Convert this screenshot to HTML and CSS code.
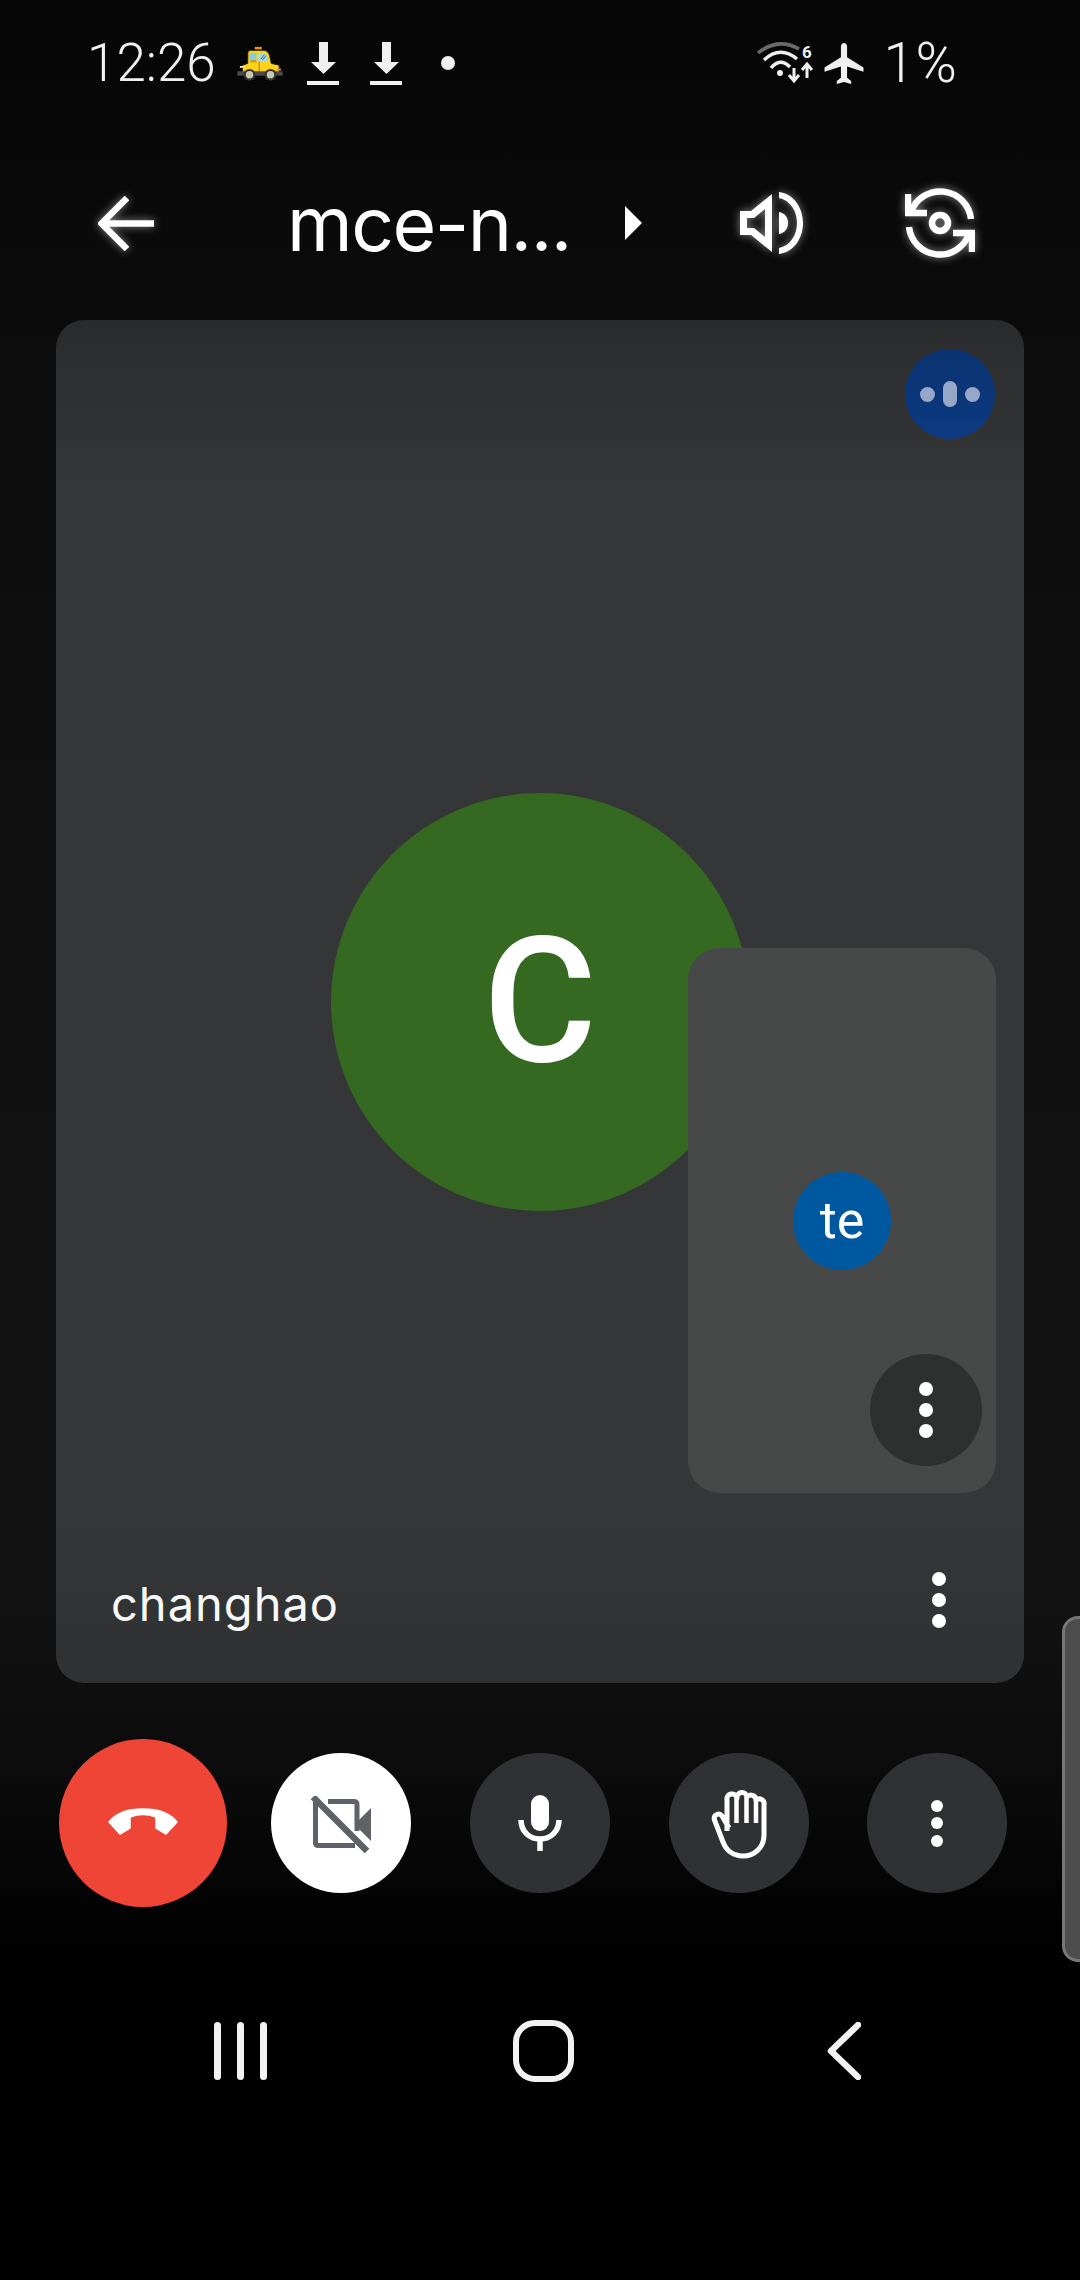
FILE: index.html
```html
<!DOCTYPE html>
<html lang="en">
<head>
    <meta charset="UTF-8">
    <meta name="viewport" content="width=device-width, initial-scale=1.0">
    <title>Meet call</title>
    <link rel="stylesheet" href="styles.css">
</head>
<body>
    <!-- status bar -->
    <div class="status-bar">
        <div class="status-left">
            <span class="status-text time">12:26</span>
            <svg class="ic-taxi" viewBox="-4 -4 64 55">
                <rect x="22" y="5" width="8" height="3" fill="#f28c1c"/>
                <path d="M14 24 V12 Q14 9 17 9 H32 Q37 9 39 15 L41 24 L50 26 V37 H8 V26 Z" fill="#ffd21a" stroke="#1a1a1a" stroke-width="1"/>
                <path d="M16 22 V12 H24 V22 Z" fill="#8ccbdc"/>
                <path d="M26 22 V12 H33 Q35 12 36 16 L38 22 Z" fill="#a3dbe6"/>
                <path d="M29 19 L33 14 M31 20 L35 15" stroke="#3a5a66" stroke-width="1"/>
                <rect x="17" y="20" width="7" height="3" rx="1" fill="#d79a12"/>
                <path d="M27 22 V35" stroke="#8a6d10" stroke-width="1"/>
                <rect x="2" y="33" width="52" height="5" fill="#4a4a4a"/>
                <rect x="5" y="27" width="5" height="2" fill="#fff3b0"/>
                <rect x="47" y="30" width="5" height="2" fill="#e88a8a"/>
                <circle cx="16" cy="37" r="5.5" fill="#c9c9b4" stroke="#333" stroke-width="2.5"/>
                <circle cx="40" cy="37" r="5.5" fill="#c9c9b4" stroke="#333" stroke-width="2.5"/>
            </svg>
            <svg class="ic-download" viewBox="0 0 32 43"><path d="M12 0 H21 V20 H29 L16.5 32 L4 20 H12 Z M0 39 H32 V43 H0 Z" fill="#f0f0f0"/></svg>
            <svg class="ic-download" viewBox="0 0 32 43"><path d="M12 0 H21 V20 H29 L16.5 32 L4 20 H12 Z M0 39 H32 V43 H0 Z" fill="#f0f0f0"/></svg>
            <span class="status-dot"></span>
        </div>
        <div class="status-right">
            <svg class="ic-wifi" viewBox="0 0 58 42">
                <path d="M1 11 Q21 -5 42 7" fill="none" stroke="#6a6a6a" stroke-width="3.5"/>
                <path d="M7 18 Q23 3 40 17" fill="none" stroke="#f0f0f0" stroke-width="3.5"/>
                <path d="M14 26 Q23 15 33 25" fill="none" stroke="#f0f0f0" stroke-width="3.5"/>
                <circle cx="23" cy="31" r="3" fill="#f0f0f0"/>
                <path d="M37 26 V39 M32 33 L37 39 L42 33 M50 36 V23 M45 28 L50 22 L55 28" fill="none" stroke="#f0f0f0" stroke-width="3"/>
                <text x="45" y="16" class="wifi-six">6</text>
            </svg>
            <svg class="ic-plane" viewBox="2 2 19 20"><path d="M21 16v-2l-8-5V3.5c0-.83-.67-1.5-1.5-1.5S10 2.67 10 3.5V9l-8 5v2l8-2.5V19l-2 1.5V22l3.5-1 3.5 1v-1.5L13 19v-5.5l8 2.5z" fill="#f0f0f0"/></svg>
            <span class="status-text battery">1%</span>
        </div>
    </div>

    <!-- top toolbar -->
    <div class="toolbar">
        <svg class="ic-back glow" viewBox="0 0 56 55"><path d="M56 27.5 H5 M29 2 L3.5 27.5 L29 53" fill="none" stroke="#fff" stroke-width="6.5"/></svg>
        <span class="title">mce-n...</span>
        <svg class="ic-caret" viewBox="0 0 17 34"><path d="M0 0 L17 17 L0 34 Z" fill="#fff"/></svg>
        <svg class="ic-speaker glow" viewBox="0 0 63 62">
            <path fill-rule="evenodd" d="M0 19 H11 L32 2 V60 L11 43 H0 Z M7 26 V36 H14 L25 45 V17 L14 26 Z" fill="#fff"/>
            <path d="M39 20 C45 21 48 26 48 31 C48 36 45 41 39 42 Z" fill="#fff"/>
            <path d="M39 0 C54 2 63 16 63 31 C63 46 54 60 39 62 V56 C50 54 57 43 57 31 C57 19 50 8 39 6 Z" fill="#fff"/>
        </svg>
        <svg class="ic-flip glow" viewBox="0 0 70 70">
            <circle cx="35" cy="35" r="8" fill="none" stroke="#fff" stroke-width="6.5"/>
            <g fill="none" stroke="#fff" stroke-width="6.5">
                <path d="M6 24 A31 31 0 0 1 66 31"/>
                <path d="M3 6 V25 H22"/>
                <path d="M64 46 A31 31 0 0 1 4 39"/>
                <path d="M67 64 V45 H48"/>
            </g>
        </svg>
    </div>

    <!-- main participant -->
    <div class="stage">
        <div class="avatar-big">C</div>

        <div class="speaking-badge">
            <span class="speak-dot"></span>
            <span class="speak-bar"></span>
            <span class="speak-dot"></span>
        </div>

        <div class="self-tile">
            <div class="avatar-small">te</div>
            <button class="tile-more">
                <span class="dots"><i></i><i></i><i></i></span>
            </button>
        </div>

        <span class="name">changhao</span>
        <span class="dots stage-dots"><i></i><i></i><i></i></span>
    </div>

    <!-- call controls -->
    <div class="controls">
        <button class="ctrl ctrl-end">
            <svg class="ic-hangup" viewBox="0 0 70 27"><path d="M1 14 C8 5 20 1 35 1 C50 1 62 5 69 14 L58 26 L48 20 V9 C40 6 30 6 22 9 V20 L12 26 Z" fill="#fff" stroke="#fff" stroke-width="1.5" stroke-linejoin="round"/></svg>
        </button>
        <button class="ctrl ctrl-video">
            <svg class="ic-video" viewBox="0 0 60 57">
                <g fill="none" stroke="#5f6368" stroke-width="5">
                    <path d="M17 5.5 H43 Q46 5.5 46 8.5 V35"/>
                    <path d="M4.5 6 V47 Q4.5 49.5 7.5 49.5 H44"/>
                </g>
                <path d="M2 1 L56 55" stroke="#5f6368" stroke-width="6.5"/>
                <path d="M48 24 L60 12 V45 L48 33 Z" fill="#5f6368"/>
            </svg>
        </button>
        <button class="ctrl">
            <svg class="ic-mic" viewBox="0 0 44 56">
                <rect x="13" y="0" width="18" height="36" rx="9" fill="#fff"/>
                <path d="M3 25 C3 36 11 44 22 44 C33 44 41 36 41 25 M22 44 V56" fill="none" stroke="#fff" stroke-width="5.5"/>
            </svg>
        </button>
        <button class="ctrl">
            <svg class="ic-hand" viewBox="0 0 56 72">
                <path d="M16 44 V13 A5 5 0 0 1 26 11 A5 5 0 0 1 36 10 A5 5 0 0 1 45 13 A5 5 0 0 1 53 18 V48 C53 61 43 69 32 69 C22 69 15 63 12 55 L3.5 33 C2 28 8 25 11 29 L18 41" fill="none" stroke="#fff" stroke-width="5" stroke-linejoin="round"/>
                <path d="M25.5 11 V36 M35.5 10 V36 M45 13 V36" fill="none" stroke="#fff" stroke-width="4.5"/>
            </svg>
        </button>
        <button class="ctrl ctrl-more">
            <span class="dots dots-small"><i></i><i></i><i></i></span>
        </button>
    </div>

    <div class="edge-panel"></div>

    <!-- android nav bar -->
    <div class="nav-bar">
        <div class="nav-recents"><i></i><i></i><i></i></div>
        <div class="nav-home"></div>
        <svg class="ic-navback" viewBox="0 0 34 58"><path d="M31 3 L4 29 L31 55" fill="none" stroke="#f2f2f2" stroke-width="6.5" stroke-linecap="round" stroke-linejoin="round"/></svg>
    </div>
</body>
</html>
```

FILE: styles.css
```css
/* page */
html, body {
    margin: 0;
    padding: 0;
}

body {
    position: relative;
    width: 1080px;
    height: 2280px;
    overflow: hidden;
    font-family: Roboto, "Liberation Sans", sans-serif;
    color: #fff;
    background: linear-gradient(to bottom, #050505 0, #0a0a0a 220px, #111 900px, #121212 1600px, #0c0c0c 1760px, #020202 1920px, #000 2020px);
}

svg {
    display: block;
    flex: none;
}

button {
    border: 0;
    padding: 0;
}

.glow {
    filter: drop-shadow(0 0 4px rgba(255, 255, 255, 0.5));
}

/* status bar */
.status-bar {
    height: 126px;
    display: flex;
    align-items: center;
    justify-content: space-between;
    padding: 0 122px 0 87px;
}

.status-left,
.status-right {
    display: flex;
    align-items: center;
}

.status-text {
    font-size: 53px;
    font-weight: 300;
    color: #f0f0f0;
    line-height: 60px;
}

.time {
    width: 145px;
}

.ic-taxi {
    width: 56px;
    height: 48px;
}

.ic-download {
    width: 32px;
    height: 43px;
    margin-left: 31px;
}

.ic-taxi + .ic-download {
    margin-left: 19px;
}

.status-dot {
    width: 14px;
    height: 14px;
    border-radius: 50%;
    background: #f0f0f0;
    margin-left: 39px;
}

.ic-wifi {
    width: 58px;
    height: 42px;
}

.wifi-six {
    font-size: 17px;
    font-weight: 700;
    fill: #f0f0f0;
}

.ic-plane {
    width: 44px;
    height: 41px;
    margin-left: 7px;
}

.battery {
    margin-left: 18px;
    font-size: 56px;
    letter-spacing: 1px;
}

/* toolbar */
.toolbar {
    height: 194px;
    display: flex;
    align-items: center;
    box-sizing: border-box;
    padding-left: 98px;
}

.ic-back {
    width: 56px;
    height: 55px;
}

.title {
    font-family: Inter, Roboto, sans-serif;
    font-size: 75px;
    letter-spacing: -1.5px;
    margin-left: 133px;
    width: 338px;
    white-space: nowrap;
}

.ic-caret {
    width: 17px;
    height: 34px;
}

.ic-speaker {
    width: 63px;
    height: 62px;
    margin-left: 98px;
}

.ic-flip {
    width: 70px;
    height: 70px;
    margin-left: 102px;
}

/* main tile */
.stage {
    position: relative;
    width: 968px;
    height: 1363px;
    margin-left: 56px;
    border-radius: 28px;
    display: flex;
    align-items: center;
    justify-content: center;
    background: linear-gradient(to bottom, #2a2b2d 0, #353638 170px, #353638 1180px, #303133 100%);
}

.avatar-big {
    width: 418px;
    height: 418px;
    border-radius: 50%;
    background: #356820;
    display: flex;
    align-items: center;
    justify-content: center;
    font-size: 174px;
    font-weight: 500;
}

.speaking-badge {
    position: absolute;
    top: 29px;
    right: 29px;
    width: 90px;
    height: 90px;
    border-radius: 50%;
    background: linear-gradient(to bottom, #0a3270, #0c3a82);
    display: flex;
    align-items: center;
    justify-content: center;
    gap: 8px;
}

.speak-dot {
    width: 15px;
    height: 15px;
    border-radius: 50%;
    background: #95a8c8;
}

.speak-bar {
    width: 14px;
    height: 26px;
    border-radius: 7px;
    background: #95a8c8;
}

.self-tile {
    position: absolute;
    left: 632px;
    top: 628px;
    width: 308px;
    height: 545px;
    border-radius: 32px;
    background: #474948;
    display: flex;
    align-items: center;
    justify-content: center;
}

.avatar-small {
    width: 98px;
    height: 98px;
    border-radius: 50%;
    background: #0059a0;
    display: flex;
    align-items: center;
    justify-content: center;
    font-size: 52px;
}

.tile-more {
    position: absolute;
    right: 14px;
    bottom: 27px;
    width: 112px;
    height: 112px;
    border-radius: 50%;
    background: #2e2f2f;
    display: flex;
    align-items: center;
    justify-content: center;
}

.dots {
    display: flex;
    flex-direction: column;
    gap: 7px;
}

.dots i {
    display: block;
    width: 14px;
    height: 14px;
    border-radius: 50%;
    background: #fff;
}

.dots-small {
    gap: 5.5px;
}

.dots-small i {
    width: 12px;
    height: 12px;
}

.name {
    position: absolute;
    left: 55px;
    bottom: 52px;
    font-family: Inter, Roboto, sans-serif;
    font-size: 47px;
    letter-spacing: 1px;
    line-height: 54px;
    color: #f8f8f8;
}

.stage-dots {
    position: absolute;
    right: 78px;
    bottom: 55px;
}

/* bottom controls */
.controls {
    height: 168px;
    margin-top: 56px;
    padding-left: 59px;
    display: flex;
    align-items: center;
    gap: 59px;
}

.ctrl {
    width: 140px;
    height: 140px;
    border-radius: 50%;
    background: #303135;
    display: flex;
    align-items: center;
    justify-content: center;
}

.ctrl-end {
    width: 168px;
    height: 168px;
    background: #ee4537;
}

.ctrl-video {
    background: #fff;
    margin-left: -15px;
}

.ctrl-more {
    margin-left: -1px;
}

.ic-hangup {
    width: 70px;
    height: 27px;
    margin-bottom: 4px;
}

.ic-video {
    width: 60px;
    height: 57px;
    margin-top: 2px;
}

.ic-mic {
    width: 44px;
    height: 56px;
}

.ic-hand {
    width: 56px;
    height: 72px;
}

.edge-panel {
    position: absolute;
    left: 1062px;
    top: 1616px;
    width: 40px;
    height: 346px;
    box-sizing: border-box;
    border: 3px solid #777;
    border-radius: 16px;
    background: #4d4d4d;
}

/* nav bar */
.nav-bar {
    margin-top: 113px;
    padding-left: 214px;
    height: 62px;
    display: flex;
    align-items: center;
}

.nav-recents {
    display: flex;
    gap: 16px;
    width: 54px;
}

.nav-recents i {
    display: block;
    width: 7px;
    height: 58px;
    border-radius: 4px;
    background: #f2f2f2;
}

.nav-home {
    width: 61px;
    height: 62px;
    box-sizing: border-box;
    border: 6px solid #f2f2f2;
    border-radius: 22px;
    margin-left: 245px;
}

.ic-navback {
    width: 34px;
    height: 58px;
    margin-left: 253px;
}
```
